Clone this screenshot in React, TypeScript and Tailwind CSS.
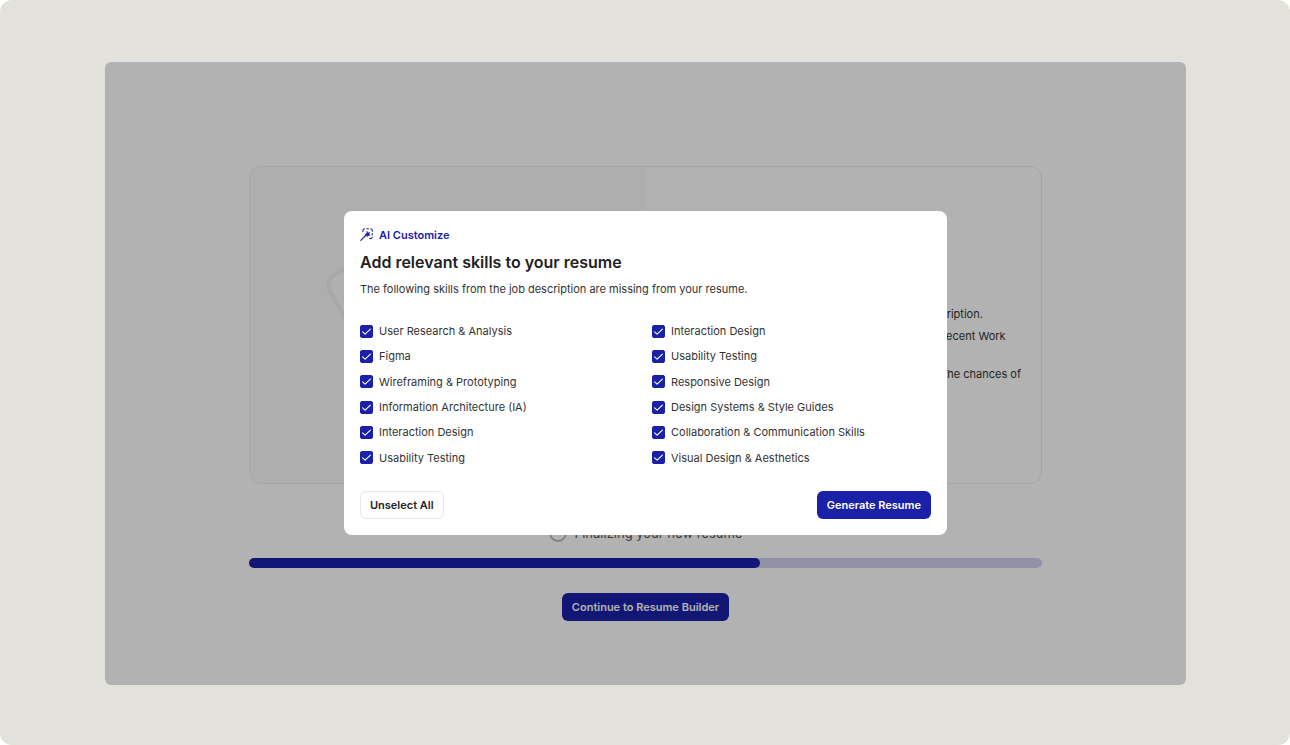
import { useState } from "react";

const leftSkills = [
  "User Research & Analysis",
  "Figma",
  "Wireframing & Prototyping",
  "Information Architecture (IA)",
  "Interaction Design",
  "Usability Testing",
];

const rightSkills = [
  "Interaction Design",
  "Usability Testing",
  "Responsive Design",
  "Design Systems & Style Guides",
  "Collaboration & Communication Skills",
  "Visual Design & Aesthetics",
];

const skills = [...leftSkills, ...rightSkills];

function WandIcon() {
  return (
    <svg className="size-[13px]" viewBox="0 0 13 13" fill="none" stroke="currentColor" strokeWidth="1.1" strokeLinecap="round" aria-hidden="true">
      <path d="M0.8 12.3 5.6 7.5" strokeWidth="1.2" />
      <path d="M7.2 3.6 8 4.9 9.7 4.4 9 6 9.9 7.4 8.2 7.4 7.1 8.7 6.7 7.1 5 6.4 6.6 5.5Z" fill="currentColor" strokeWidth="0.6" strokeLinejoin="round" />
      <path d="M2.9 3.6V2.6A1.9 1.9 0 0 1 4.5 0.8M6.8 0.7H8.4M10.8 0.8A1.9 1.9 0 0 1 12.3 2.4V3.2M12.3 5.6V7M12.3 9.2A1.9 1.9 0 0 1 10.6 10.6H9.8" />
    </svg>
  );
}

function GhostDocument() {
  return (
    <svg className="h-[200px] w-60 overflow-visible" viewBox="0 0 240 200" fill="#fcfcfc" stroke="#f1f1f1" strokeWidth="4" aria-hidden="true">
      <rect width="120" height="170" rx="12" transform="translate(-4 56) rotate(-30)" />
    </svg>
  );
}

function SkillOption({ label, checked, onToggle }: { label: string; checked: boolean; onToggle: () => void }) {
  return (
    <label className="flex items-center gap-1.5">
      <span className="grid size-[13px] shrink-0 place-items-center">
        <input
          type="checkbox"
          checked={checked}
          onChange={onToggle}
          className="col-start-1 row-start-1 size-[13px] appearance-none rounded-[2px] border border-[#1a21a8] bg-white checked:bg-[#1a21a8]"
        />
        <svg className="pointer-events-none col-start-1 row-start-1 size-[13px]" viewBox="0 0 13 13" fill="none" stroke="#fff" strokeWidth="1.1" strokeLinecap="round" strokeLinejoin="round" aria-hidden="true">
          <path d="M2.6 6.8 5.1 9.2 10.4 4.1" />
        </svg>
      </span>
      {label}
    </label>
  );
}

export default function App() {
  const [selected, setSelected] = useState<boolean[]>(skills.map(() => true));
  const toggle = (index: number) => setSelected(selected.map((value, i) => (i === index ? !value : value)));

  return (
    <div className="flex min-h-screen bg-white font-['Inter',sans-serif] text-[11px] leading-4 text-[#333]">
      <div className="flex flex-1 rounded-xl bg-[#e2e1dc] pt-[62px] pr-[104px] pb-[60px] pl-[105px]">
        <main className="relative flex-1 overflow-hidden rounded-md bg-white px-36 pt-[104px]">
          <section className="grid min-h-[318px] grid-cols-2 overflow-hidden rounded-xl border border-[#eeeeee]">
            <div className="flex items-center justify-center bg-[#fafafa]">
              <GhostDocument />
            </div>
            <div className="flex flex-col items-end justify-center pt-[38px] pr-5">
              <ul className="flex flex-col gap-1.5 whitespace-nowrap">
                <li>Fit job description.</li>
                <li>
                  Your most recent Work
                  <br />
                  Experience
                </li>
                <li>Increasing the chances of</li>
              </ul>
            </div>
          </section>

          <div className="mt-[39px] flex items-center justify-center gap-2 text-[13px] leading-5 text-[#555]">
            <span className="size-[18px] rounded-full border-2 border-[#b8b8b8]" />
            Finalizing your new resume
          </div>

          <div className="mt-[15px] h-2.5 rounded-full bg-[#d2d2f0]" role="progressbar" aria-valuenow={64} aria-valuemin={0} aria-valuemax={100} aria-label="Resume progress">
            <div className="h-full w-[64.4%] rounded-full bg-[#1a21a8]" />
          </div>

          <div className="mt-[25px] flex justify-center">
            <button type="button" className="h-7 rounded-md bg-[#1a21a8] px-2.5 font-semibold text-white">
              Continue to Resume Builder
            </button>
          </div>

          <div className="absolute inset-0 flex items-center justify-center bg-black/30 pb-0.5">
            <div role="dialog" aria-modal="true" aria-labelledby="dialog-title" className="w-full max-w-[603px] rounded-lg bg-white p-4">
              <div className="flex items-center gap-1.5 font-semibold text-[#1a21a8]">
                <WandIcon />
                AI Customize
              </div>
              <h1 id="dialog-title" className="mt-[7px] text-base leading-6 font-semibold text-[#222]">
                Add relevant skills to your resume
              </h1>
              <p className="mt-[7px]">The following skills from the job description are missing from your resume.</p>

              <div className="mt-[22px] grid min-h-[152px] grid-flow-col grid-cols-[1fr_279px] grid-rows-6">
                {skills.map((skill, index) => (
                  <SkillOption key={index} label={skill} checked={selected[index]} onToggle={() => toggle(index)} />
                ))}
              </div>

              <div className="mt-5 flex items-center justify-between font-semibold">
                <button type="button" onClick={() => setSelected(skills.map(() => false))} className="h-7 rounded-md border border-[#e8e8e8] px-[9px] text-[#222]">
                  Unselect All
                </button>
                <button type="button" className="h-7 rounded-md bg-[#1a21a8] px-2.5 text-white">
                  Generate Resume
                </button>
              </div>
            </div>
          </div>
        </main>
      </div>
    </div>
  );
}
